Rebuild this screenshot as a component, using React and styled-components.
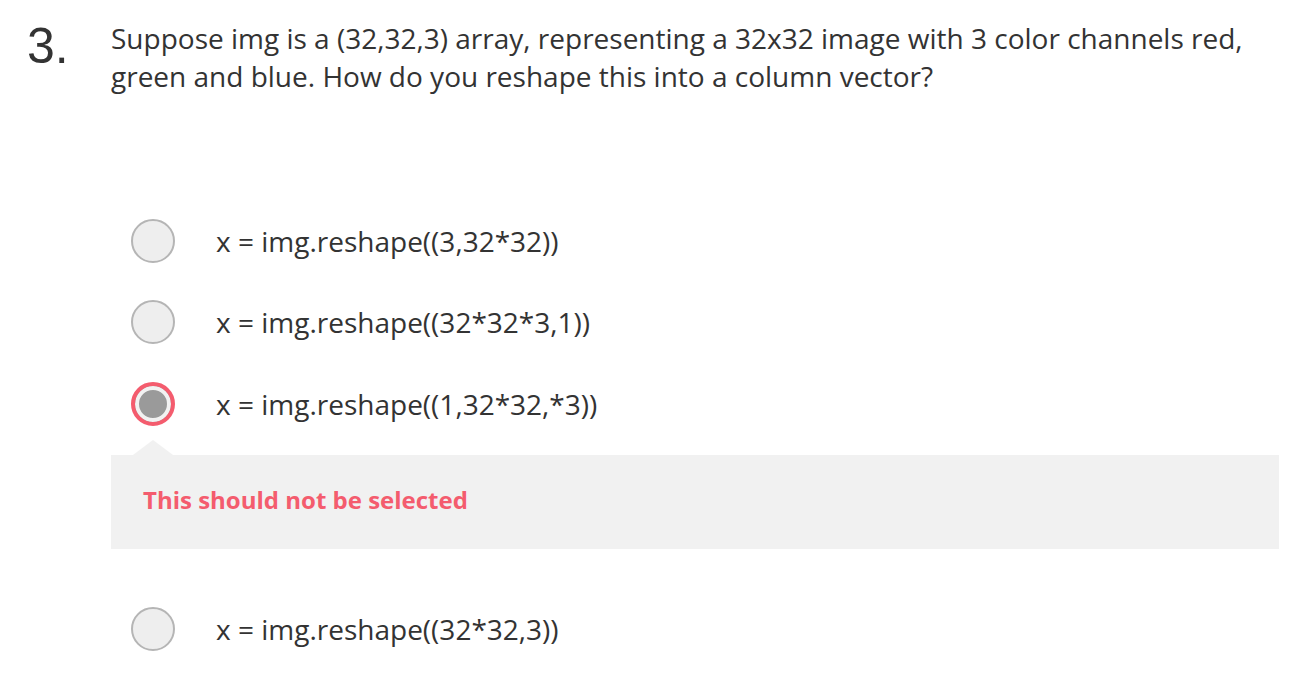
import React from 'react'
import styled, { createGlobalStyle } from 'styled-components';

const GlobalStyle = createGlobalStyle`
  body {
    margin: 0;
    background: #fff;
    font-family: "Open Sans", "Liberation Sans", sans-serif;
    color: #333;
  }
`

const Question = styled.div`
  display: flex;
  padding: 19px 0 0 27px;
  width: 1252px;
`

const Number = styled.div`
  width: 84px;
  flex-shrink: 0;
  font-family: "Liberation Sans", Arial, sans-serif;
  font-size: 50px;
  line-height: 50px;
  color: #333;
  margin-top: 2px;
`

const Body = styled.div`
  flex: 1;
`

const Prompt = styled.p`
  margin: 0;
  font-size: 28px;
  line-height: 38px;
  color: #333;
`

const Options = styled.div`
  display: flex;
  flex-direction: column;
  margin-top: 124px;
`

const Option = styled.label`
  display: flex;
  align-items: center;
  height: 44px;
  margin-bottom: ${(p) => p.gap}px;
  padding-left: 20px;
`

const Radio = styled.span`
  box-sizing: border-box;
  width: 44px;
  height: 44px;
  border-radius: 50%;
  flex-shrink: 0;
  border: ${(p) => (p.wrong ? '4px solid #f45c6e' : '2px solid #b5b5b5')};
  background: ${(p) => (p.wrong ? '#9a9a9a' : '#eeeeee')};
  box-shadow: ${(p) => (p.wrong ? 'inset 0 0 0 4px #f2f2f2' : 'none')};
`

const OptionText = styled.span`
  margin-left: 41px;
  font-size: 28px;
  color: #333;
`

const Feedback = styled.div`
  position: relative;
  box-sizing: border-box;
  margin: 29px 0 58px;
  background: #f1f1f1;
  height: 94px;
  display: flex;
  align-items: center;
  padding: 0 0 5px 32px;
  font-size: 24px;
  font-weight: 700;
  color: #f45c6e;

  &::before {
    content: "";
    position: absolute;
    left: 22px;
    top: -15px;
    border-left: 20px solid transparent;
    border-right: 20px solid transparent;
    border-bottom: 15px solid #f1f1f1;
  }
`

const App = () => {
  return (
    <>
      <GlobalStyle />
      <Question>
        <Number>3.</Number>
        <Body>
          <Prompt>
            Suppose img is a (32,32,3) array, representing a 32x32 image with 3 color channels red,
            green and blue. How do you reshape this into a column vector?
          </Prompt>
          <Options>
            <Option gap={37}>
              <Radio />
              <OptionText>x = img.reshape((3,32*32))</OptionText>
            </Option>
            <Option gap={38}>
              <Radio />
              <OptionText>x = img.reshape((32*32*3,1))</OptionText>
            </Option>
            <Option gap={0}>
              <Radio wrong />
              <OptionText>x = img.reshape((1,32*32,*3))</OptionText>
            </Option>
            <Feedback>This should not be selected</Feedback>
            <Option gap={0}>
              <Radio />
              <OptionText>x = img.reshape((32*32,3))</OptionText>
            </Option>
          </Options>
        </Body>
      </Question>
    </>
  )
}

export default App
